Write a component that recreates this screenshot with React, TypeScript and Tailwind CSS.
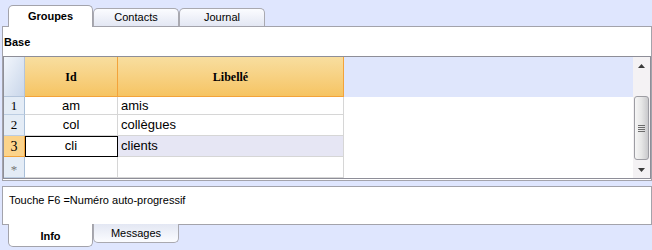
import React from "react";

const rows = [
  { n: "1", id: "am", lib: "amis", h: "h-[18px]" },
  { n: "2", id: "col", lib: "collègues", h: "h-[21px]" },
  { n: "3", id: "cli", lib: "clients", h: "h-[21px]", sel: true },
  { n: "*", id: "", lib: "", h: "h-[21px]" },
];

function TopTab({ label, active }: { label: string; active?: boolean }) {
  if (active) {
    return (
      <div className="relative z-10 -mb-px w-[85px] h-[22px] bg-white border border-b-0 border-[#a3a3ab] rounded-t-[5px] flex items-center justify-center text-[11px] font-bold">
        {label}
      </div>
    );
  }
  return (
    <div className="w-[86px] h-[18px] bg-gradient-to-b from-[#fbfcff] to-[#e3e7f3] border border-b-0 border-[#a9a9b0] rounded-t-[5px] flex items-center justify-center text-[11px]">
      {label}
    </div>
  );
}

function Arrow({ down }: { down?: boolean }) {
  return (
    <svg width="7" height="4" viewBox="0 0 7 4" className={down ? "rotate-180" : ""}>
      <path d="M3.5 0 L7 4 L0 4 Z" fill="#3a3a3a" />
    </svg>
  );
}

export default function App() {
  return (
    <div className="w-[652px] h-[250px] bg-[#dfe6fe] font-['Liberation_Sans',Arial,sans-serif] text-black overflow-hidden">
      {/* onglets du haut */}
      <div className="flex items-end h-[26px] pl-[8px]">
        <TopTab label="Groupes" active />
        <TopTab label="Contacts" />
        <TopTab label="Journal" />
      </div>

      {/* panneau principal */}
      <div className="ml-[2px] w-[650px] h-[155px] bg-white border border-[#a3a3ab] flex flex-col">
        <div className="h-[29px] pl-[1px] pt-[8px] text-[11px] font-bold leading-[14px]">Base</div>

        <div className="h-[123px] border border-[#8e8e98] flex">
          <div className="flex-1 flex flex-col">
            {/* en-tête */}
            <div className="flex h-[40px]">
              <div className="w-[21px] bg-gradient-to-br from-[#f2f6fc] to-[#c9d6ea] border-r border-b border-[#b4c4da]" />
              <div className="w-[93px] bg-gradient-to-b from-[#f8de9f] to-[#f6c462] border-r border-b border-[#f3a33a] flex items-center justify-center font-['Liberation_Serif',serif] font-bold text-[12px]">
                Id
              </div>
              <div className="w-[226px] bg-gradient-to-b from-[#f8de9f] to-[#f6c462] border-r border-b border-[#f3a33a] flex items-center justify-center font-['Liberation_Serif',serif] font-bold text-[12px]">
                Libellé
              </div>
              <div className="flex-1 bg-[#dfe6fc]" />
            </div>

            {/* lignes */}
            {rows.map((r) => (
              <div key={r.n} className={`flex ${r.h}`}>
                <div
                  className={`w-[21px] flex items-center justify-center font-['Liberation_Serif',serif] border-r ${
                    r.sel
                      ? "bg-[#fbd38b] border-b border-b-[#f3a33a] border-r-[#f3a33a] text-[14px]"
                      : "bg-[#e4ecf6] border-b border-b-[#bccde2] border-r-[#a9bfd8] text-[13px]"
                  } ${r.n === "*" ? "text-[9px] text-[#777] items-start pt-[3px]" : ""}`}
                >
                  {r.n}
                </div>
                <div
                  className={`w-[93px] flex items-center justify-center text-[13px] border-r border-b border-[#d6d6d6] ${
                    r.sel ? "outline outline-1 -outline-offset-1 outline-black" : ""
                  }`}
                >
                  {r.id}
                </div>
                <div
                  className={`w-[226px] flex items-center pl-[3px] text-[13px] border-r border-b border-[#d6d6d6] ${
                    r.sel ? "bg-[#e6e6f4]" : ""
                  }`}
                >
                  {r.lib}
                </div>
                <div className="flex-1" />
              </div>
            ))}
          </div>

          {/* barre de défilement */}
          <div className="w-[17px] bg-[#f4f2f4] flex flex-col items-center">
            <div className="h-[17px] w-full flex items-center justify-center">
              <Arrow />
            </div>
            <div className="h-[22px]" />
            <div className="w-[15px] h-[64px] rounded-[3px] border border-[#9d9da3] bg-gradient-to-r from-[#f6f6f6] via-[#e6e6e6] to-[#c9c9cc] flex flex-col items-center justify-center gap-[1px]">
              <div className="w-[7px] h-px bg-[#6c6c6c]" />
              <div className="w-[7px] h-px bg-[#6c6c6c]" />
              <div className="w-[7px] h-px bg-[#6c6c6c]" />
              <div className="w-[7px] h-px bg-[#6c6c6c]" />
            </div>
            <div className="flex-1" />
            <div className="h-[17px] w-full flex items-center justify-center">
              <Arrow down />
            </div>
          </div>
        </div>
      </div>

      {/* panneau info */}
      <div className="mt-[5px] ml-[2px] w-[650px] h-[39px] bg-white border border-[#a3a3ab] pl-[6px] pt-[6px] text-[11px] leading-[14px]">
        Touche F6 =Numéro auto-progressif
      </div>

      {/* onglets du bas */}
      <div className="flex items-start pl-[8px]">
        <div className="relative z-10 -mt-px w-[85px] h-[23px] bg-white border border-t-0 border-[#a3a3ab] rounded-b-[5px] flex items-center justify-center pt-[2px] text-[11px] font-bold">
          Info
        </div>
        <div className="-mt-px w-[86px] h-[19px] bg-gradient-to-b from-[#e3e7f3] to-[#fbfcff] border border-t-0 border-[#a9a9b0] rounded-b-[5px] flex items-center justify-center text-[11px]">
          Messages
        </div>
      </div>
    </div>
  );
}
